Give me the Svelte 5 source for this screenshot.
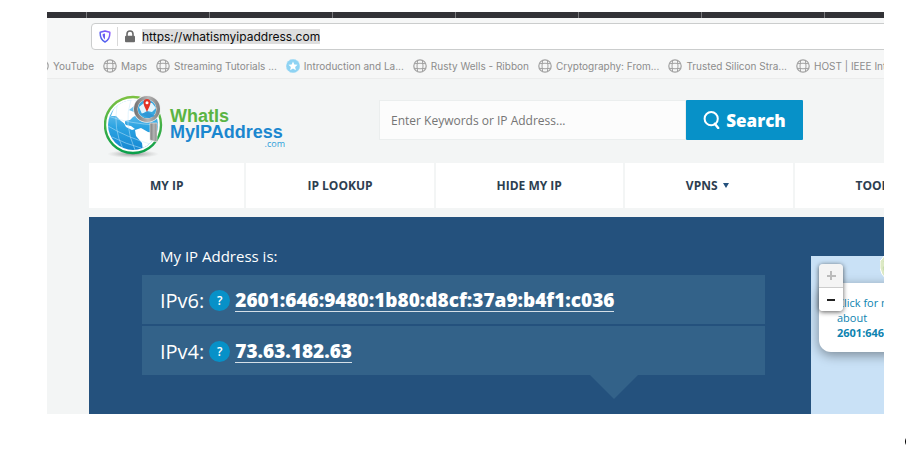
<script>
  const tabs = ['t1', 't2', 't3', 't4', 't5', 't6', 't7'];
  const bookmarks = [
    { label: 'YouTube', icon: 'globe' },
    { label: 'Maps', icon: 'globe' },
    { label: 'Streaming Tutorials ...', icon: 'globe' },
    { label: 'Introduction and La...', icon: 'star' },
    { label: 'Rusty Wells - Ribbon', icon: 'globe' },
    { label: 'Cryptography: From...', icon: 'globe' },
    { label: 'Trusted Silicon Stra...', icon: 'globe' },
    { label: 'HOST | IEEE International', icon: 'globe' }
  ];
  const menu = [
    { label: 'MY IP' },
    { label: 'IP LOOKUP' },
    { label: 'HIDE MY IP' },
    { label: 'VPNS', more: true },
    { label: 'TOOLS', more: true }
  ];
  const addresses = [
    { kind: 'IPv6:', value: '2601:646:9480:1b80:d8cf:37a9:b4f1:c036' },
    { kind: 'IPv4:', value: '73.63.182.63' }
  ];
  let url = $state('https://whatismyipaddress.com');
  let query = $state('');
</script>

<div class="page">
  <div class="window">
    <div class="tabs">
      {#each tabs as tab (tab)}<span class="tab"></span>{/each}
    </div>
    <div class="toolbar">
      <div class="urlbar">
        <svg class="shield" viewBox="0 0 12 13" aria-hidden="true">
          <defs>
            <linearGradient id="shieldFill" x1="0" y1="1" x2="1" y2="0">
              <stop offset="0" stop-color="#3d63e8" />
              <stop offset="1" stop-color="#9059ff" />
            </linearGradient>
          </defs>
          <path d="M6 1 L10.8 2.2 C11.1 7.2 9.6 10.3 6 12 C2.4 10.3 .9 7.2 1.2 2.2 Z" fill="#fff" stroke="url(#shieldFill)" stroke-width="1.5" stroke-linejoin="round" />
          <path d="M6 3.5 V9.5 C4.2 8.2 3.6 6.5 3.6 4.1 Z" fill="#6c5cf0" />
        </svg>
        <span class="rule"></span>
        <svg class="lock" viewBox="0 0 12 13" aria-hidden="true">
          <path d="M3 6 V4 a3 3 0 0 1 6 0 V6" fill="none" stroke="#6b6b6b" stroke-width="1.6" />
          <rect x="1" y="5.7" width="10" height="6.5" rx="1" fill="#6b6b6b" />
        </svg>
        <input class="url" type="text" aria-label="Address" bind:value={url} />
      </div>
      <nav class="bookmarks" aria-label="Bookmarks">
        {#each bookmarks as mark (mark.label)}
          <a href="#bookmark">
            {#if mark.icon === 'globe'}
              <svg viewBox="0 0 14 14" aria-hidden="true" fill="none" stroke="#a2a2a2">
                <circle cx="7" cy="7" r="6.2" stroke-width="1.2" />
                <path d="M4.6 1.5 Q3.4 7 4.6 12.5 M9.4 1.5 Q10.6 7 9.4 12.5 M1.3 4.7 Q7 3.8 12.7 4.7 M1.3 9.3 Q7 10.2 12.7 9.3" stroke-width="1" />
              </svg>
            {:else}
              <svg viewBox="0 0 14 14" aria-hidden="true">
                <circle cx="7" cy="7" r="6.8" fill="#8ed3f3" stroke="#a9ddf5" stroke-width=".5" stroke-dasharray="3 1" />
                <path d="M7 2.4 L8.3 5.4 L11.6 5.7 L9.1 7.9 L9.9 11.2 L7 9.5 L4.1 11.2 L4.9 7.9 L2.4 5.7 L5.7 5.4 Z" fill="#fff" />
              </svg>
            {/if}
            <span>{mark.label}</span>
          </a>
        {/each}
      </nav>
    </div>

    <div class="site">
      <header>
        <a class="logo" href="#home">
          <svg class="globe" viewBox="0 0 62 66" aria-hidden="true">
            <defs>
              <linearGradient id="ring" x1="0" y1="0" x2="0" y2="1">
                <stop offset="0" stop-color="#7cc142" />
                <stop offset="1" stop-color="#0aa04b" />
              </linearGradient>
              <linearGradient id="ocean" x1="0" y1="0" x2="0" y2="1">
                <stop offset="0" stop-color="#8fd2f2" />
                <stop offset=".55" stop-color="#2ba3e2" />
                <stop offset="1" stop-color="#1688d2" />
              </linearGradient>
              <linearGradient id="steel" x1="0" y1="0" x2="1" y2="0">
                <stop offset="0" stop-color="#777" />
                <stop offset=".55" stop-color="#b5b5b5" />
                <stop offset="1" stop-color="#868686" />
              </linearGradient>
              <radialGradient id="ground">
                <stop offset="0" stop-color="#777" stop-opacity=".8" />
                <stop offset="1" stop-color="#aaa" stop-opacity="0" />
              </radialGradient>
              <clipPath id="ball"><circle cx="29" cy="31" r="25" /></clipPath>
            </defs>
            <ellipse cx="29" cy="60" rx="26" ry="4" fill="url(#ground)" />
            <circle cx="29" cy="31" r="28" fill="#fff" stroke="url(#ring)" stroke-width="2.4" />
            <circle cx="29" cy="31" r="25" fill="url(#ocean)" />
            <g clip-path="url(#ball)">
              <path d="M11 12 C17 5 29 2 38 7 L34 14 L30 12 L25 16 L30 18 L33 21 L29 23 L26 26 L21 27 L21 30 L17 27 L12 22 L7 22 Z" fill="#fff" />
              <path d="M19 27 L22 31 L27 32 L31 35 L28 36 L22 33 Z" fill="#fff" />
              <path d="M31 36 L37 34 L44 38 L56 40 L55 47 L47 54 L43 59 L39 57 L38 49 L32 42 Z" fill="#fff" />
              <path d="M4 32 Q22 43 49 51 M8 43 Q22 50 37 54 M13 12 Q9 34 19 55 M27 6 Q19 29 31 56 M4 22 Q26 30 54 31" fill="none" stroke="#c5e9fb" stroke-width=".7" opacity=".7" />
            </g>
            <path d="M46 29 H53 V48 L46 46 Z" fill="url(#steel)" stroke="#e7e7e7" stroke-width=".7" />
            <circle cx="43" cy="15" r="11.5" fill="#3ba9df" stroke="#eee" stroke-width="4.5" />
            <circle cx="43" cy="15" r="11.3" fill="none" stroke="url(#steel)" stroke-width="3.5" />
            <path d="M35 13 L40 9 L48 9 L52 14 L48 18 L43 17 L38 20 Z" fill="#e3f4fc" />
            <path d="M36 20 L44 18 L51 22 L45 24 Z" fill="#3197d5" />
            <path d="M43 18 C40 12 39.5 10 39.5 8.6 a3.5 3.5 0 0 1 7 0 C46.5 10 46 12 43 18 Z" fill="#e33225" />
            <circle cx="43" cy="8.7" r="1.5" fill="#fff" />
          </svg>
          <span class="wordmark">
            <span class="top">WhatIs</span>
            <span class="mid">MyIPAddress</span>
            <span class="com">.com</span>
          </span>
        </a>
        <form class="search" onsubmit={(e) => e.preventDefault()}>
          <input type="text" aria-label="Search" placeholder="Enter Keywords or IP Address..." bind:value={query} />
          <button type="submit">
            <svg viewBox="0 0 18 18" aria-hidden="true" fill="none" stroke="#fff">
              <circle cx="8.2" cy="7.7" r="6.6" stroke-width="2" />
              <path d="M11.8 12.8 L15.2 17" stroke-width="2.4" stroke-linecap="round" />
            </svg>
            Search
          </button>
        </form>
      </header>

      <nav class="menu" aria-label="Main">
        {#each menu as item (item.label)}
          <a href="#menu">{item.label}{#if item.more}<span class="caret"></span>{/if}</a>
        {/each}
      </nav>

      <main>
        <section class="addresses">
          <h1>My IP Address is:</h1>
          <div class="rows">
            {#each addresses as row (row.kind)}
              <div class="row">
                <span>{row.kind}</span>
                <button class="help" type="button" aria-label="About {row.kind}">?</button>
                <a href="#ip">{row.value}</a>
              </div>
            {/each}
          </div>
        </section>
        <section class="map" aria-label="Map">
          <svg class="land" viewBox="0 0 30 30" aria-hidden="true">
            <path d="M4 0 L2 3 L0 5 L0 12 L2 18 L6 23 L13 28 H30 V0 Z" fill="#dce9c4" stroke="#fff" />
            <path d="M5 3 L4 6 L6 8 L3 12 L6 18 L12 22" fill="none" stroke="#c3d9a8" />
          </svg>
          <div class="popup">
            <a href="#details">Click for more details<br />about<br /><b>2601:646:9480:1b80</b></a>
          </div>
          <div class="zoom">
            <button type="button" disabled aria-label="Zoom in"><span class="plus"></span></button>
            <button type="button" aria-label="Zoom out"><span class="minus"></span></button>
          </div>
        </section>
      </main>
    </div>
  </div>
  <span class="dot"></span>
</div>

<style>
  :global(body) { margin: 0; background: #fff; }
  * { box-sizing: border-box; }
  a { color: inherit; text-decoration: none; }
  button, input { font-family: inherit; margin: 0; border: 0; }
  svg { display: block; flex: none; }

  .page {
    position: relative;
    min-height: 100vh;
    padding: 12px 22px 44px 47px;
    overflow: hidden;
    font-family: "Open Sans", "Noto Sans", sans-serif;
  }
  .window { overflow: hidden; background: #f3f5f5; }

  .tabs { display: flex; height: 6px; background: #323236; overflow: hidden; }
  .tab { flex: 0 0 123px; border-right: 1px solid #77777a; }
  .tab:first-child { flex-basis: 40px; }

  .toolbar {
    padding: 5px 0 0;
    background: #f6f7f7;
    border-bottom: 1px solid #ebecec;
    font-family: Inter, Roboto, sans-serif;
  }
  .urlbar {
    display: flex;
    align-items: center;
    height: 27px;
    margin: 0 -8px 0 44px;
    padding-left: 7px;
    background: #fff;
    border: 1px solid #cbcdcd;
    border-radius: 4px;
  }
  .shield { width: 12px; height: 13px; }
  .rule { width: 1px; height: 19px; margin: 0 6px; background: #d9d9d9; }
  .lock { width: 12px; height: 13px; }
  .url {
    field-sizing: content;
    height: 15px;
    margin-left: 6px;
    padding: 0;
    background: #dedede;
    color: #0c0c0d;
    font-size: 12px;
    line-height: 15px;
  }
  .bookmarks {
    display: flex;
    gap: 9px;
    height: 28px;
    margin-left: -12px;
    padding-top: 4px;
    align-items: center;
    color: #8c8c8c;
    font-size: 10px;
    white-space: nowrap;
  }
  .bookmarks a { display: flex; flex: none; gap: 4px; align-items: center; }
  .bookmarks svg { width: 14px; height: 14px; }

  .site { padding-left: 42px; }
  header { display: flex; height: 84px; padding-bottom: 2px; align-items: center; }
  .logo { display: flex; width: 290px; padding-left: 15px; }
  .globe { width: 62px; height: 66px; margin-top: 13px; }
  .wordmark {
    display: flex;
    flex-direction: column;
    margin: 27px 0 0 4px;
    width: 115px;
    font: bold 18px/16px "Liberation Sans", Arial, sans-serif;
  }
  .top { color: #5ab443; }
  .mid { color: #1b87cf; }
  .com { align-self: flex-end; color: #2f9fda; font: 9px/7px "Open Sans", sans-serif; }

  .search { display: flex; flex: 1; margin-right: 81px; height: 40px; }
  .search input {
    flex: 1;
    min-width: 0;
    padding: 0 11px;
    background: #fcfcfc;
    border: 1px solid #ebeeee;
    color: #666;
    font-size: 12px;
  }
  .search input::placeholder { color: #757575; opacity: 1; }
  .search button {
    display: flex;
    flex: 0 0 117px;
    align-items: center;
    justify-content: center;
    gap: 5px;
    padding: 0;
    background: #0791c8;
    border-radius: 1px;
    color: #fff;
    font-size: 17px;
    font-weight: 800;
  }
  .search svg { width: 18px; height: 18px; }

  .menu { display: flex; gap: 2px; overflow: hidden; }
  .menu a {
    display: flex;
    flex: none;
    align-items: center;
    height: 45px;
    padding: 0 61px;
    background: #fff;
    color: #2d3e50;
    font-size: 12px;
    font-weight: 700;
  }
  .caret {
    margin: 0 3px 0 5px;
    border: solid transparent;
    border-width: 5px 3px 0;
    border-top-color: #24517d;
  }

  main {
    display: flex;
    gap: 46px;
    min-height: 197px;
    margin-top: 9px;
    padding-left: 53px;
    background: #24517d;
    color: #fff;
  }
  .addresses { flex: 1; padding-top: 28px; }
  h1 { margin: 0 0 7px 18px; font-size: 15px; line-height: 23px; font-weight: 500; }
  .rows { position: relative; display: flex; flex-direction: column; gap: 2px; }
  .rows::after {
    content: "";
    position: absolute;
    top: 100%;
    right: 127px;
    border: solid transparent;
    border-width: 24px 24px 0;
    border-top-color: #336289;
  }
  .row {
    display: flex;
    align-items: center;
    gap: 5px;
    height: 49px;
    padding: 2px 0 0 18px;
    background: #336289;
    font-size: 20px;
    line-height: 26px;
  }
  .help {
    width: 21px;
    height: 21px;
    padding: 0;
    border-radius: 50%;
    background: #0791c8;
    color: #fff;
    font-size: 12px;
    font-weight: 600;
    line-height: 21px;
  }
  .row a {
    font-size: 19px;
    font-weight: 800;
    line-height: 22px;
    border-bottom: 1px solid #d5e0e8;
  }

  .map {
    position: relative;
    flex: 0 0 73px;
    margin-top: 39px;
    overflow: hidden;
    background: #c9e1f6;
  }
  .land { position: absolute; top: 0; left: 69px; width: 30px; height: 30px; }
  .popup {
    position: absolute;
    top: 27px;
    left: 8px;
    padding: 12px 18px;
    border-radius: 12px;
    background: #fff;
    box-shadow: 0 3px 12px rgba(0, 0, 0, 0.4);
    color: #0d83b0;
    font-size: 11px;
    line-height: 15px;
    white-space: nowrap;
  }
  .zoom {
    position: absolute;
    top: 8px;
    left: 8px;
    width: 24px;
    border-radius: 4px;
    box-shadow: 0 1px 5px rgba(0, 0, 0, 0.65);
    overflow: hidden;
  }
  .zoom button {
    display: flex;
    width: 100%;
    height: 23px;
    padding: 0;
    align-items: center;
    justify-content: center;
    background: #fff;
  }
  .zoom button:disabled { height: 24px; background: #f4f4f4; border-bottom: 1px solid #ccc; }
  .minus { width: 8px; height: 2px; background: #222; }
  .plus {
    width: 9px;
    height: 9px;
    background:
      linear-gradient(#bbb, #bbb) center / 9px 2px no-repeat,
      linear-gradient(#bbb, #bbb) center / 2px 9px no-repeat;
  }
  .dot {
    position: absolute;
    right: -12px;
    bottom: 10px;
    width: 13px;
    height: 13px;
    border-radius: 50%;
    background: #000;
  }
</style>
